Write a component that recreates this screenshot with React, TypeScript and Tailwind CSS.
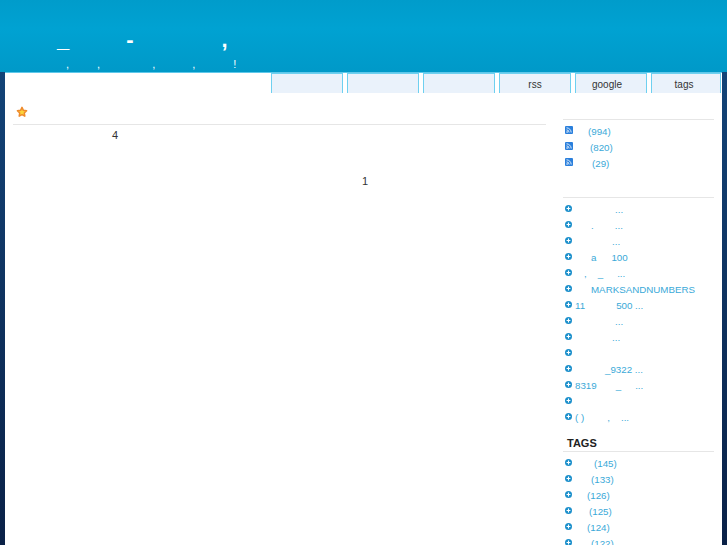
import React from 'react';

type Seg = [string, string];

const tabs: Seg[] = [
  ['', ''],
  ['', ''],
  ['', ''],
  ['', 'rss'],
  ['pr-2', 'google'],
  ['pr-1', 'tags'],
];

const feeds: Seg[][] = [
  [['ml-[13px]', '(994)']],
  [['ml-[15px]', '(820)']],
  [['ml-[17px]', '(29)']],
];

const posts: Seg[][] = [
  [['ml-[40px]', '...']],
  [['ml-[16px]', '.'], ['ml-[21px]', '...']],
  [['ml-[37px]', '...']],
  [['ml-[16px]', 'a'], ['ml-[15px]', '100']],
  [['ml-[9px]', ','], ['ml-[11px]', '_'], ['ml-[14px]', '...']],
  [['ml-[16px]', 'MARKSANDNUMBERS']],
  [['', '11'], ['ml-[31px]', '500 ...']],
  [['ml-[40px]', '...']],
  [['ml-[37px]', '...']],
  [],
  [['ml-[30px]', '_9322 ...']],
  [['', '8319'], ['ml-[19px]', '_'], ['ml-[14px]', '...']],
  [],
  [['', '( )'], ['ml-[23px]', ','], ['ml-[11px]', '...']],
];

const tags: Seg[][] = [
  [['ml-[19px]', '(145)']],
  [['ml-[16px]', '(133)']],
  [['ml-[12px]', '(126)']],
  [['ml-[14px]', '(125)']],
  [['ml-[12px]', '(124)']],
  [['ml-[16px]', '(122)']],
];

const RssIcon = () => (
  <svg viewBox="0 0 8 8" className="w-2 h-2 shrink-0">
    <rect width="8" height="8" rx="1" fill="#2a7fdc" />
    <path d="M1.5 1.8a4.8 4.8 0 0 1 4.7 4.7M1.5 3.9a2.6 2.6 0 0 1 2.6 2.6" fill="none" stroke="#dcecfb" strokeWidth="1" />
    <circle cx="2.1" cy="6" r="0.8" fill="#fff" />
  </svg>
);

const PlusIcon = () => (
  <svg viewBox="0 0 7 7" className="w-[7px] h-[7px] shrink-0">
    <circle cx="3.5" cy="3.5" r="3.5" fill="#1b8fcb" />
    <path d="M3.5 1.6v3.8M1.6 3.5h3.8" stroke="#fff" strokeWidth="1.1" />
  </svg>
);

const StarIcon = () => (
  <svg viewBox="0 0 12 12" className="w-3 h-3">
    <path d="M6 1.4l1.4 2.9 3.2.5-2.3 2.2.5 3.2L6 8.7l-2.8 1.5.5-3.2L1.4 4.8l3.2-.5z" fill="#fbd33a" stroke="#ee8a2c" strokeWidth="1.5" strokeLinejoin="round" />
  </svg>
);

const Row = ({ segs, icon }: { segs: Seg[]; icon: React.ReactNode }) => (
  <li className="flex h-4 pt-[2px] items-center whitespace-pre">
    <span className="w-[10px] -mt-[4px] flex">{icon}</span>
    {segs.map(([cls, text], i) => (
      <span key={i} className={cls}>{text}</span>
    ))}
  </li>
);

export default function App() {
  return (
    <div className="h-[545px] w-[727px] overflow-hidden font-['Liberation_Sans',Arial,sans-serif] text-[10px] bg-gradient-to-b from-[#14497f] to-[#0a2147]">
      <header className="h-[72px] bg-gradient-to-b from-[#009ccb] via-[#00a2d2] via-40% to-[#0099c8] text-white">
        <div className="h-[50px] pt-[29px] pl-[57px] flex text-[22px] leading-[21px] font-bold whitespace-pre">
          <span>_</span>
          <span className="ml-[57px]">-</span>
          <span className="ml-[88px]">,</span>
        </div>
        <div className="flex pl-[66px] text-[11px] leading-[13px] mt-[8px] whitespace-pre">
          <span>,</span>
          <span className="ml-[28px]">,</span>
          <span className="ml-[52px]">,</span>
          <span className="ml-[37px]">,</span>
          <span className="ml-[38px]">!</span>
        </div>
      </header>

      <div className="mx-[5px] h-[473px] bg-white border-t border-[#5fc8ea] overflow-hidden">
        <nav className="flex gap-1 pl-[266px]">
          {tabs.map(([cls, label], i) => (
            <a key={i} className="w-[72px] last:w-[70px] h-5 pt-px flex items-center justify-center bg-[#eaf2fb] border border-b-0 border-[#6ed0f0] text-[#333333]">
              <span className={cls}>{label}</span>
            </a>
          ))}
        </nav>

        <div className="flex">
          <main className="w-[533px] ml-2 text-[11px] text-[#333333]">
            <div className="h-[32px] pt-[13px] pl-[3px] border-b border-[#e6e6e6] flex items-start">
              <StarIcon />
            </div>
            <p className="pl-[99px] mt-[4px] leading-[13px]">4</p>
            <p className="pl-[349px] mt-[33px] leading-[13px]">1</p>
          </main>

          <aside className="w-[151px] ml-[17px] text-[9.75px] text-[#3aa9d8]">
            <div className="mt-[26px] border-b border-[#e6e6e6]" />
            <ul className="mt-[3px] pl-[2px]">
              {feeds.map((segs, i) => (
                <Row key={i} segs={segs} icon={<RssIcon />} />
              ))}
            </ul>
            <div className="mt-[26px] border-b border-[#e6e6e6]" />
            <ul className="mt-[3px] pl-[2px]">
              {posts.map((segs, i) => (
                <Row key={i} segs={segs} icon={<PlusIcon />} />
              ))}
            </ul>
            <h3 className="h-[27px] pt-[12px] pl-1 border-b border-[#e6e6e6] text-[11px] leading-[13px] font-bold text-[#222222]">TAGS</h3>
            <ul className="mt-[3px] pl-[2px]">
              {tags.map((segs, i) => (
                <Row key={i} segs={segs} icon={<PlusIcon />} />
              ))}
            </ul>
          </aside>
        </div>
      </div>
    </div>
  );
}
